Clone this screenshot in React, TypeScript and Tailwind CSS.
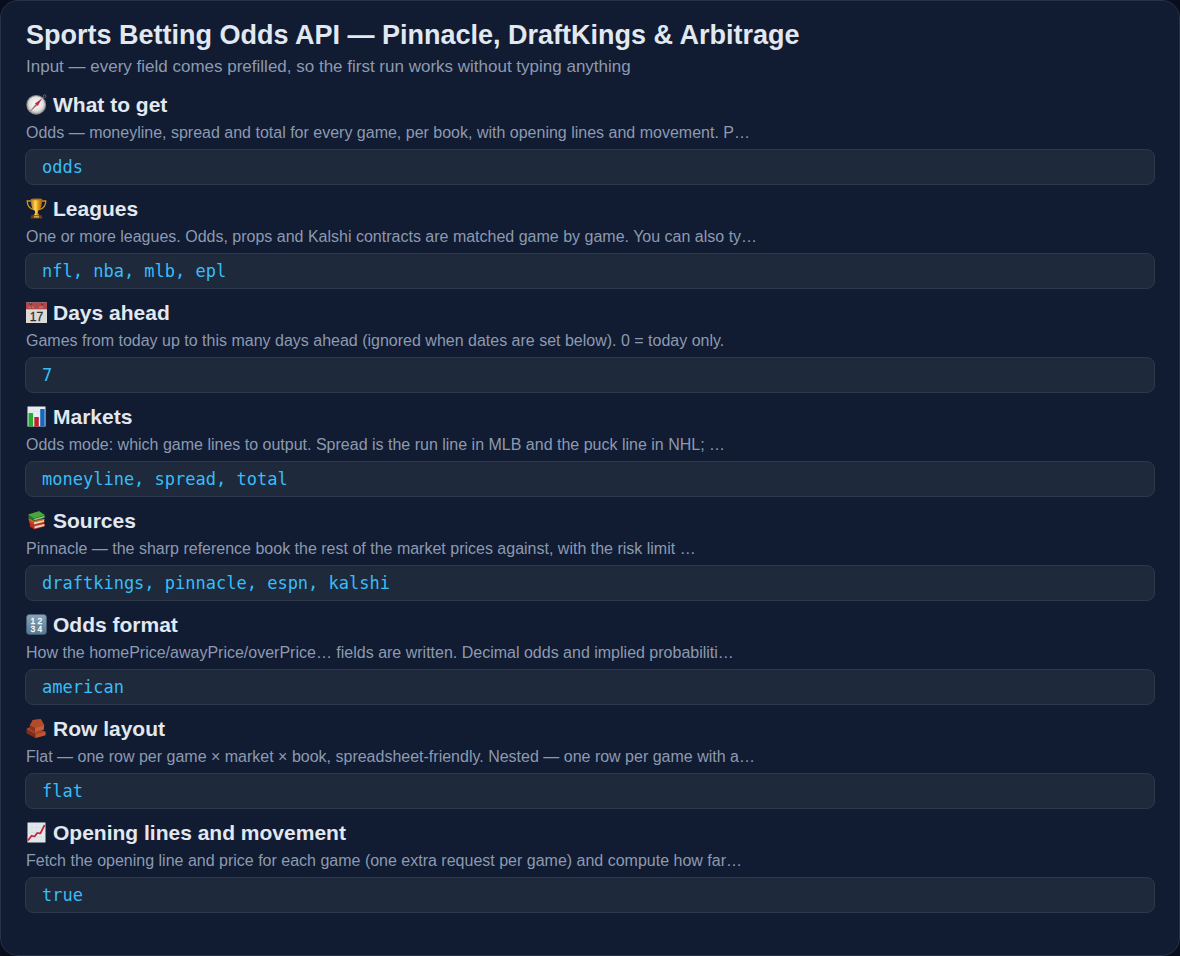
import type { ReactNode } from 'react';

function Compass() {
  return (
    <svg viewBox="0 0 21 21" className="mb-px size-[21px] shrink-0" aria-hidden="true">
      <defs>
        <radialGradient id="dial" cx="50%" cy="45%" r="55%">
          <stop offset="0" stopColor="#ffffff" />
          <stop offset="0.7" stopColor="#e3e2e3" />
          <stop offset="1" stopColor="#a9a6a6" />
        </radialGradient>
      </defs>
      <circle cx="18.6" cy="2.2" r="1.4" fill="none" stroke="#7c828c" strokeWidth="0.7" />
      <circle cx="10.2" cy="10.8" r="9.9" fill="#8e8b8c" />
      <circle cx="10.2" cy="10.8" r="8.9" fill="url(#dial)" />
      <path d="M15.8 4.8 11.8 12 8.8 9.4Z" fill="#dc2740" />
      <path d="M4.6 17 9.4 10 11.2 11.6Z" fill="#a98f90" />
      <path d="M4.6 17 15.8 4.8" stroke="#8d3b45" strokeWidth="0.6" />
    </svg>
  );
}

function Trophy() {
  return (
    <svg viewBox="0 0 21 21" className="mb-px size-[21px] shrink-0" aria-hidden="true">
      <defs>
        <linearGradient id="gold" x1="0" x2="1">
          <stop offset="0" stopColor="#b96b09" />
          <stop offset="0.4" stopColor="#ffdc62" />
          <stop offset="0.65" stopColor="#e79a16" />
          <stop offset="1" stopColor="#a65a05" />
        </linearGradient>
      </defs>
      <path d="M5.5 3H1.2C1.2 7.8 3.3 10.6 8 11.5M15.5 3h4.3c0 4.8-2.1 7.6-6.8 8.5" fill="none" stroke="#d8921a" strokeWidth="1.3" />
      <path d="M4.8 1h11.4c0 6-1.2 10.4-4.3 12v2.7H9.1V13C6 11.4 4.8 7 4.8 1Z" fill="url(#gold)" />
      <ellipse cx="10.5" cy="1.4" rx="5.7" ry="0.9" fill="#b97810" />
      <path d="M8.5 15.5h4l1.3 2.5H7.2Z" fill="url(#gold)" />
      <path d="M5.4 17.3h10.2l.7 3.2H4.7Z" fill="#76420e" />
      <path d="M8 18.2h5v1.4H8Z" fill="#d7b47c" />
    </svg>
  );
}

function CalendarPage() {
  return (
    <svg viewBox="0 0 21 21" className="mb-px size-[21px] shrink-0" aria-hidden="true">
      <path d="M0 0.5h21V21H0Z" fill="#dcdad6" />
      <path d="M0 0.5h21v6.8H0Z" fill="#b3484b" />
      <path d="M2.5 5.2h2M6 5.2h2M13 5.2h4" stroke="#dfa5a4" strokeWidth="0.7" />
      <circle cx="4.7" cy="1.9" r="1.1" fill="#5c2c35" />
      <circle cx="16.3" cy="1.9" r="1.1" fill="#5c2c35" />
      <path d="M4.7 0v1.6M16.3 0v1.6" stroke="#a5a5aa" strokeWidth="0.7" />
      <text x="10.5" y="18.5" textAnchor="middle" fontSize="12" fontWeight="400" fontFamily="Liberation Sans, sans-serif" fill="#303134" stroke="#303134" strokeWidth="0.3">17</text>
    </svg>
  );
}

function BarChart() {
  return (
    <svg viewBox="0 0 21 21" className="mb-px size-[21px] shrink-0" aria-hidden="true">
      <path d="M1.5 0.5h18v20h-18Z" fill="#e6edf2" />
      <path d="M1.5 5.5h18M7.500.5v20" stroke="#cedae2" strokeWidth="0.4" />
      <path d="M2.5 7h4.5v13.5H2.5Z" fill="#27a938" />
      <path d="M8.3 11h4.5v9.5H8.3Z" fill="#c51f2b" />
      <path d="M14.2 3h4.5v17.5h-4.5Z" fill="#1766bd" />
    </svg>
  );
}

function Books() {
  return (
    <svg viewBox="0 0 21 21" className="mb-px size-[21px] shrink-0" aria-hidden="true">
      <path d="M3.5 13 15 11.5l3.8 2.2v2.800L8.5 19.500 4 16.700Z" fill="#b32f22" />
      <path d="m8.500 16.200 9.800-2.200v1.900l-9.800 2.500Z" fill="#e2d0bd" />
      <path d="M2.700 8.500 15 8l3.500 1.500v3L8 15.300l-5-3Z" fill="#c8402b" />
      <path d="m8 12.200 10-2.300v1.800L8 14.200Z" fill="#ecdcc5" />
      <path d="m2.700 8.200 5.300 3.300L18.500 9v1.100L8 12.600 2.800 9.500Z" fill="#c98129" />
      <path d="m2.300 4.500 10.700-3.300L18.800 5v3L8 11.200 2.600 7.700Z" fill="#27752d" />
      <path d="m2.300 4.500 10.700-3.300L18.800 5 8 8.300Z" fill="#4ca53a" />
      <path d="m8.200 8.900 10.100-2.900v1.300L8.200 10.300Z" fill="#b4c795" />
    </svg>
  );
}

function Numbers() {
  return (
    <svg viewBox="0 0 21 21" className="mb-px size-[21px] shrink-0" aria-hidden="true">
      <defs>
        <linearGradient id="keycap" x1="0" y1="0" x2="0" y2="1">
          <stop offset="0" stopColor="#8ba3b5" />
          <stop offset="1" stopColor="#56788f" />
        </linearGradient>
      </defs>
      <rect x="0.5" y="0.5" width="20" height="20" rx="3" fill="url(#keycap)" stroke="#45647e" strokeWidth="0.6" />
      <g fill="#fff" stroke="#fff" strokeWidth="0.3" fontFamily="Liberation Sans, sans-serif" fontSize="8.5" fontWeight="400" textAnchor="middle">
        <text x="6.8" y="9.5">1</text>
        <text x="13.8" y="9.5">2</text>
        <text x="6.8" y="17.5">3</text>
        <text x="13.8" y="17.5">4</text>
      </g>
    </svg>
  );
}

function Bricks() {
  return (
    <svg viewBox="0 0 21 21" className="mb-px size-[21px] shrink-0" aria-hidden="true">
      <path d="M0.5 11 5 8.5 19.5 14v3.3L9.5 20 .7 15.5Z" fill="#7d2d1a" />
      <path d="M0.5 11 5 8.5 19.5 13.5 9.5 16Z" fill="#a9472a" />
      <path d="M9.5 16 19.5 13.5v3.8L9.5 20Z" fill="#bf5532" />
      <path d="m3.8 7.5 3-5.5 8-1 3.4 6-.4 4.5L9 14.2 3.8 11Z" fill="#8b341d" />
      <path d="m3.8 7.5 3-5.5 8-1 3.4 6-9.2 2.7Z" fill="#b24c2c" />
      <path d="m9 9.7 9.2-2.7-.4 4.5L9 14.2Z" fill="#c75c37" />
    </svg>
  );
}

function TrendChart() {
  return (
    <svg viewBox="0 0 21 21" className="mb-px size-[21px] shrink-0" aria-hidden="true">
      <path d="M1.5 0.5h18v20h-18Z" fill="#e1e8ea" />
      <path d="M1.5 5.5h18M1.5 10.5h18M1.5 15.5h18M6 .5v20M10.500.5v20M15 .5v20" stroke="#cfdadd" strokeWidth="0.4" />
      <path d="m2 18.500 3.600-4.800 3 .8 2.600-3.500 3.200.4L18.600 3" fill="none" stroke="#c52331" strokeWidth="1.700" strokeLinejoin="round" />
    </svg>
  );
}

type Field = { id: string; icon: ReactNode; title: string; hint: string; value: string };

const fields: Field[] = [
  { id: 'mode', icon: <Compass />, title: 'What to get', hint: 'Odds — moneyline, spread and total for every game, per book, with opening lines and movement. P…', value: 'odds' },
  { id: 'leagues', icon: <Trophy />, title: 'Leagues', hint: 'One or more leagues. Odds, props and Kalshi contracts are matched game by game. You can also ty…', value: 'nfl, nba, mlb, epl' },
  { id: 'days', icon: <CalendarPage />, title: 'Days ahead', hint: 'Games from today up to this many days ahead (ignored when dates are set below). 0 = today only.', value: '7' },
  { id: 'markets', icon: <BarChart />, title: 'Markets', hint: 'Odds mode: which game lines to output. Spread is the run line in MLB and the puck line in NHL; …', value: 'moneyline, spread, total' },
  { id: 'sources', icon: <Books />, title: 'Sources', hint: 'Pinnacle — the sharp reference book the rest of the market prices against, with the risk limit …', value: 'draftkings, pinnacle, espn, kalshi' },
  { id: 'format', icon: <Numbers />, title: 'Odds format', hint: 'How the homePrice/awayPrice/overPrice… fields are written. Decimal odds and implied probabiliti…', value: 'american' },
  { id: 'layout', icon: <Bricks />, title: 'Row layout', hint: 'Flat — one row per game × market × book, spreadsheet-friendly. Nested — one row per game with a…', value: 'flat' },
  { id: 'movement', icon: <TrendChart />, title: 'Opening lines and movement', hint: 'Fetch the opening line and price for each game (one extra request per game) and compute how far…', value: 'true' },
];

function FieldRow({ id, icon, title, hint, value }: Field) {
  return (
    <div className="flex flex-col">
      <label htmlFor={id} className="flex items-center gap-1.5 px-px text-[21px] leading-7 font-bold text-slate-200">
        {icon}
        {title}
      </label>
      <p id={`${id}-hint`} className="px-px text-base leading-7 text-[#8c9ab0]">{hint}</p>
      <input
        id={id}
        aria-describedby={`${id}-hint`}
        defaultValue={value}
        className="mt-0.5 h-9 w-full rounded-lg border border-[#2d394b] bg-[#1e293b] px-4 font-['DejaVu_Sans_Mono',monospace] text-[17px] text-[#38bdf8] outline-none focus:border-sky-400"
      />
    </div>
  );
}

export default function App() {
  return (
    <div className="min-h-screen bg-[#080e1c] font-['Liberation_Sans',Arial,sans-serif]">
      <main className="min-h-screen rounded-[18px] border border-[#263248] bg-[#111b32] px-6 pt-4 pb-10">
        <h1 className="px-px text-[27px] leading-9 font-bold text-slate-200">Sports Betting Odds API — Pinnacle, DraftKings &amp; Arbitrage</h1>
        <p className="px-px text-[17px] leading-7 text-[#8c9ab0]">Input — every field comes prefilled, so the first run works without typing anything</p>
        <form className="mt-2.5 flex flex-col gap-2.5">
          {fields.map((field) => (
            <FieldRow key={field.id} {...field} />
          ))}
        </form>
      </main>
    </div>
  );
}
